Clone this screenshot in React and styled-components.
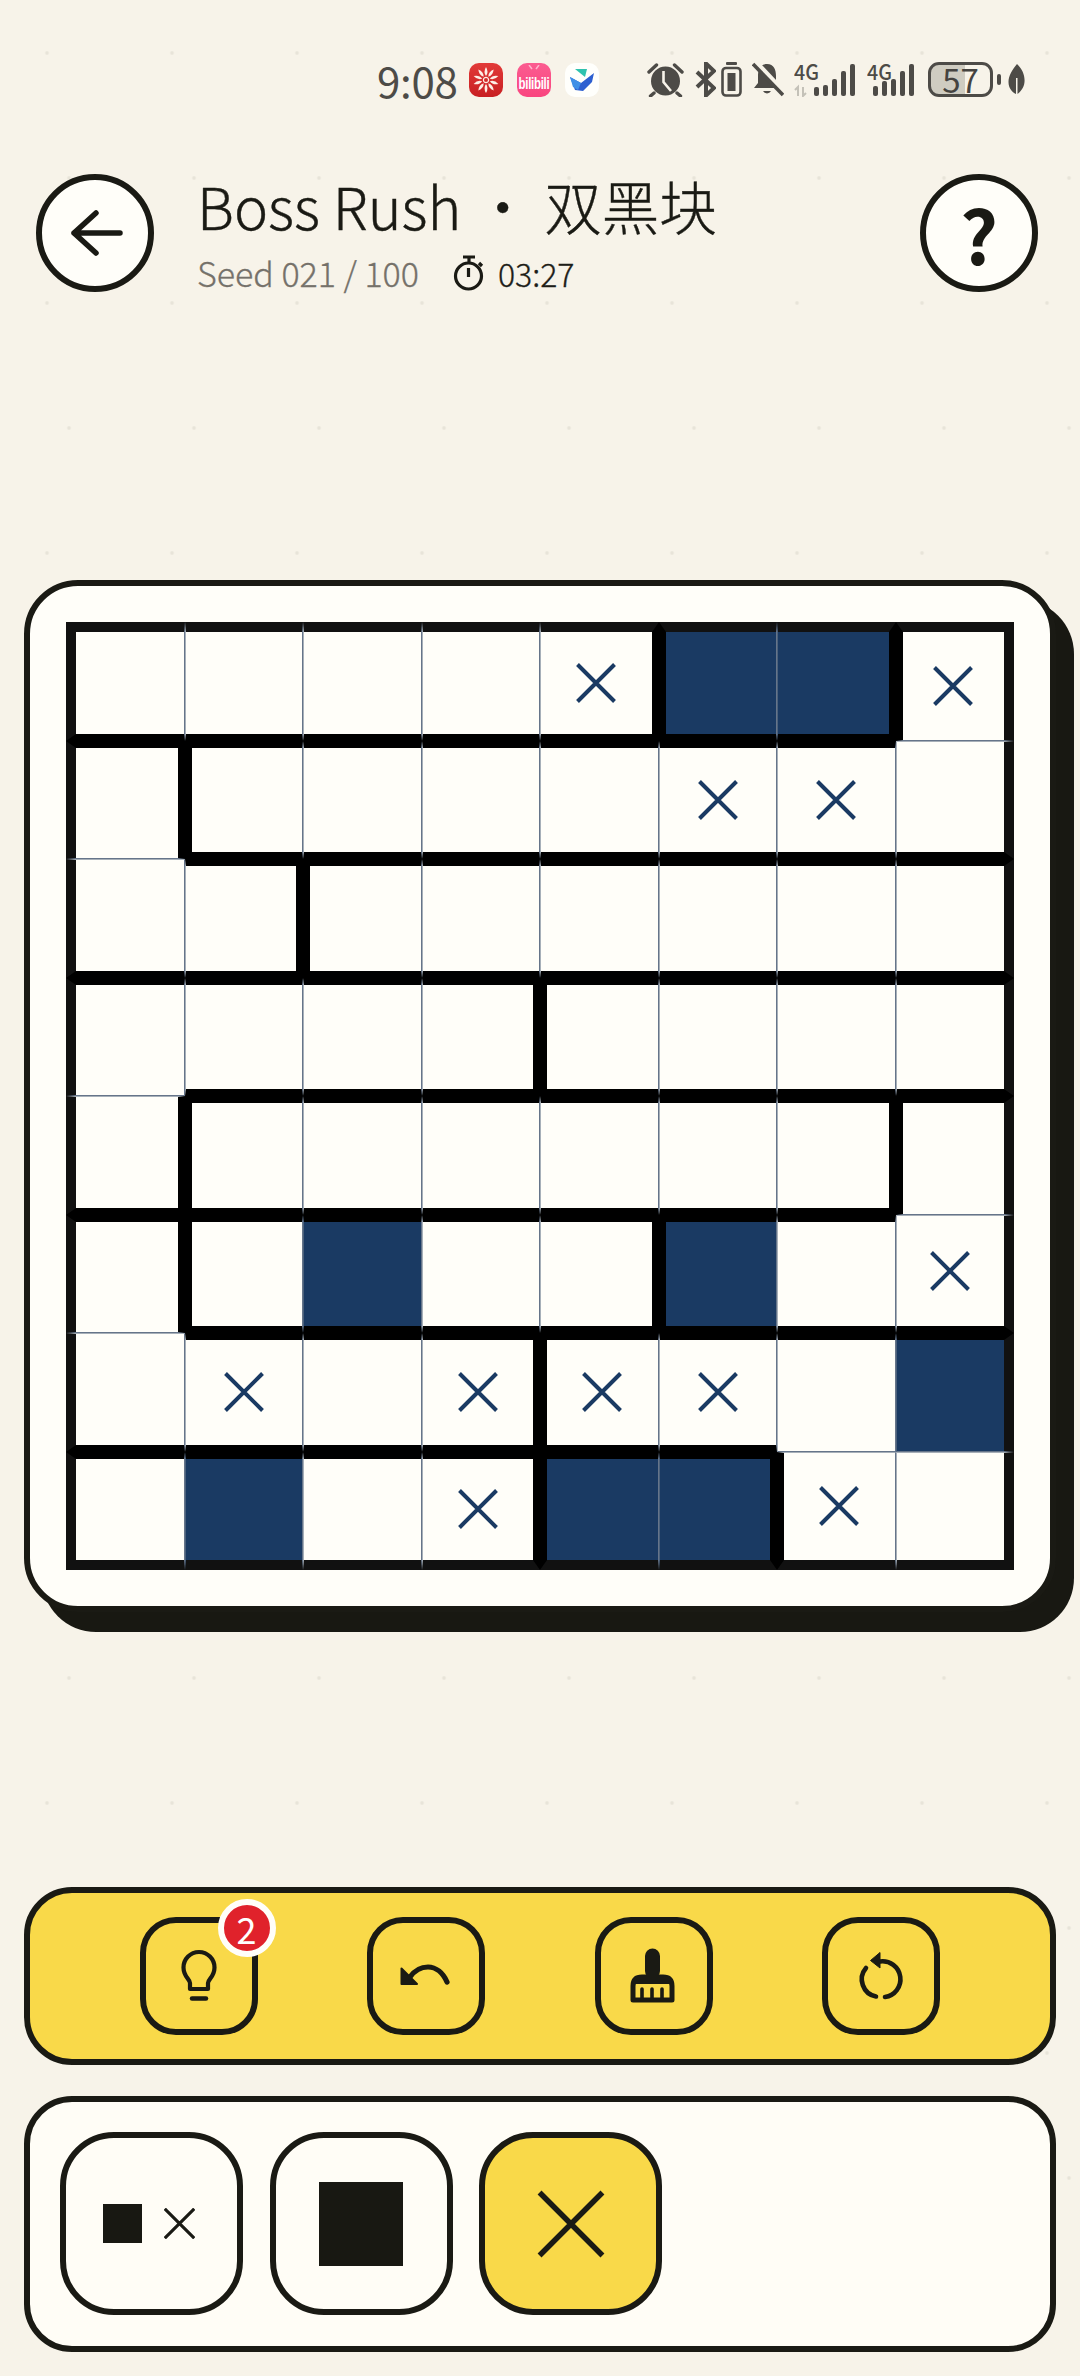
import React from 'react';
import styled, { createGlobalStyle } from 'styled-components';

const INK = '#1a1a14';
const BG = '#f7f3e9';
const STATUS = '#4d4b47';
const FONT = '"Noto Sans CJK SC", "Noto Sans", sans-serif';

const Global = createGlobalStyle`
  html, body { margin: 0; padding: 0; background: ${BG}; }
  * { box-sizing: border-box; }
`;

const Page = styled.div`
  width: 1080px;
  height: 2376px;
  padding: 0 24px;
  overflow: hidden;
  display: flex;
  flex-direction: column;
  font-family: ${FONT};
  color: ${INK};
  background-color: ${BG};
  background-image:
    radial-gradient(circle, #e8e4d9 1.4px, transparent 2.2px),
    radial-gradient(circle, #e8e4d9 1.4px, transparent 2.2px);
  background-size: 125px 250px, 125px 250px;
  background-position: -15.5px -72px, 6.5px 53px;
`;

/* status bar */
const StatusBar = styled.div`
  margin-top: 62px;
  height: 35px;
  padding-left: 353px;
  display: flex;
  align-items: center;
`;
const Clock = styled.div`
  width: 92px;
  font-size: 42px;
  line-height: 35px;
  letter-spacing: -0.3px;
  color: ${STATUS};
`;
const AppIcon = styled.div`
  position: relative;
  width: 34px;
  height: 34px;
  margin-right: 14px;
  border-radius: 10px;
  background: ${p => p.$bg};
  display: flex;
  align-items: center;
  justify-content: center;
  overflow: hidden;
`;
const BiliText = styled.span`
  font-family: "Liberation Sans", sans-serif;
  font-size: 11.5px;
  line-height: 12px;
  font-weight: 700;
  color: #fff;
  letter-spacing: -0.3px;
  margin-top: 6px;
  transform: scaleY(1.4);
`;
const BiliEars = styled.svg`
  position: absolute;
  top: 2px;
  left: 8px;
`;
const Glyph = styled.svg`
  display: block;
  flex: none;
  margin-left: ${p => p.$gap || 0}px;
  margin-top: ${p => p.$lift ? -p.$lift : 0}px;
`;
const BatteryBody = styled.div`
  margin-left: 12px;
  width: 65px;
  height: 35px;
  border: 3px solid ${STATUS};
  border-radius: 11px;
  background: linear-gradient(90deg, #cfccc1 0 58%, transparent 58%);
  color: #454340;
  font-size: 33px;
  line-height: 28px;
  text-align: center;
`;
const BatteryNub = styled.div`
  margin-left: 4px;
  width: 4px;
  height: 11px;
  border-radius: 2px;
  background: ${STATUS};
`;

/* header */
const Header = styled.header`
  margin-top: 77px;
  height: 118px;
  padding: 0 18px 0 12px;
  display: flex;
  align-items: flex-start;
`;
const RoundButton = styled.button`
  flex: none;
  width: 118px;
  height: 118px;
  padding: 0;
  border: 6px solid ${INK};
  border-radius: 50%;
  background: #fffef9;
  color: ${INK};
  font-family: ${FONT};
  font-size: 74px;
  font-weight: 700;
  line-height: 1;
  display: flex;
  align-items: center;
  justify-content: center;
`;
const TitleBlock = styled.div`
  flex: 1;
  margin-left: 43px;
  margin-top: -3px;
  display: flex;
  flex-direction: column;
`;
const Title = styled.h1`
  margin: 0;
  font-size: 57.500px;
  font-weight: 300;
  -webkit-text-stroke: 0.4px ${INK};
  line-height: 68px;
  white-space: pre;
`;
const SubRow = styled.div`
  margin-top: 11px;
  display: flex;
  align-items: center;
  line-height: 46px;
`;
const Seed = styled.span`
  font-size: 34px;
  font-weight: 300;
  -webkit-text-stroke: 0.3px #75716a;
  color: #75716a;
`;
const Time = styled.span`
  margin-left: 12px;
  font-size: 32px;
  font-weight: 300;
  -webkit-text-stroke: 0.3px #1d1d18;
  color: #1d1d18;
`;

/* board */
const Card = styled.section`
  margin-top: 288px;
  width: 1032px;
  height: 1032px;
  padding: 36px;
  border: 6px solid ${INK};
  border-radius: 54px;
  background: #fffef9;
  box-shadow: 18px 20px 0 #181812;
`;
const Board = styled.div`
  width: 948px;
  height: 948px;
  display: grid;
  grid-template-columns: repeat(8, 1fr);
  grid-template-rows: repeat(8, 1fr);
`;
const edge = v =>
  v === 'outer' ? '10px solid #111' :
  v === 'wall' ? '7px solid #000' :
  v === 'thin' ? '1px solid #66758a' :
  v === 'soft' ? '1px solid rgba(109,124,141,.6)' : 'none';
const Cell = styled.div`
  min-width: 0;
  min-height: 0;
  display: flex;
  align-items: center;
  justify-content: center;
  background: ${p => (p.$filled ? '#1a3a63' : '#fffef9')};
  border-top: ${p => edge(p.$t)};
  border-right: ${p => edge(p.$r)};
  border-bottom: ${p => edge(p.$b)};
  border-left: ${p => edge(p.$l)};
`;

/* tool bar */
const Toolbar = styled.div`
  margin-top: 275px;
  height: 178px;
  border: 6px solid ${INK};
  border-radius: 48px;
  background: #f9d949;
  display: flex;
  align-items: center;
  justify-content: space-evenly;
`;
const ToolButton = styled.button`
  position: relative;
  width: 118px;
  height: 118px;
  padding: 0;
  border: 6px solid ${INK};
  border-radius: 36px;
  background: transparent;
  display: flex;
  align-items: center;
  justify-content: center;
`;
const Badge = styled.span`
  position: absolute;
  top: -24px;
  right: -24px;
  width: 58px;
  height: 58px;
  border: 6px solid #fffef9;
  border-radius: 50%;
  background: #e0222b;
  color: #fff;
  font-family: ${FONT};
  font-size: 36px;
  font-weight: 400;
  line-height: 46px;
  text-align: center;
`;

/* mode panel */
const ModePanel = styled.div`
  margin-top: 31px;
  height: 256px;
  padding: 30px;
  border: 6px solid ${INK};
  border-radius: 48px;
  background: #fffdf6;
  display: flex;
  gap: 26.500px;
`;
const ModeButton = styled.button`
  width: 183px;
  height: 183px;
  padding: 0 ${p => p.$shift || 0}px 0 0;
  border: 6px solid ${INK};
  border-radius: 54px;
  background: ${p => (p.$active ? '#f9d949' : '#fffdf6')};
  display: flex;
  align-items: center;
  justify-content: center;
`;
const Square = styled.div`
  width: ${p => p.$size}px;
  height: ${p => p.$size}px;
  background: #181812;
`;

const vWalls = [[4, 6], [0], [1], [3], [0, 6], [0, 4], [3], [3, 5]];
const hWalls = [
  [0, 1, 2, 3, 4, 5, 6],
  [1, 2, 3, 4, 5, 6, 7],
  [0, 1, 2, 3, 4, 5, 6, 7],
  [1, 2, 3, 4, 5, 6, 7],
  [0, 1, 2, 3, 4, 5, 6],
  [1, 2, 3, 4, 5, 6, 7],
  [0, 1, 2, 3, 4, 5],
];
const marks = [
  '....x##x',
  '.....xx.',
  '........',
  '........',
  '........',
  '..#..#.x',
  '.x.xxx.#',
  '.#.x##x.',
];

const CrossMark = ({ size = 40, color = '#1a3a63', width = 4 }) => (
  <Glyph width={size} height={size} viewBox="0 0 40 40">
    <path d="M1.5 1.5 38.5 38.5M38.5 1.5 1.5 38.5" stroke={color} strokeWidth={width * 40 / size} fill="none" />
  </Glyph>
);

const cells = [];
for (let r = 0; r < 8; r++) {
  for (let c = 0; c < 8; c++) {
    cells.push({
      key: `${r}-${c}`,
      t: r === 0 ? 'outer' : hWalls[r - 1].includes(c) ? 'wall' : 'soft',
      b: r === 7 ? 'outer' : hWalls[r].includes(c) ? 'wall' : 'thin',
      l: c === 0 ? 'outer' : vWalls[r].includes(c - 1) ? 'wall' : 'soft',
      r: c === 7 ? 'outer' : vWalls[r].includes(c) ? 'wall' : 'thin',
      m: marks[r][c],
    });
  }
}

const Net = ({ gap, textX, barX, heights, arrows, w }) => (
  <Glyph $gap={gap} $lift={7} width={w} height={42} viewBox={`0 -7 ${w} 42`}>
    <text x={textX} y={18} fontFamily='"Noto Sans CJK SC", sans-serif' fontSize="21" fontWeight="500" textLength="25" lengthAdjust="spacingAndGlyphs" fill={STATUS}>4G</text>
    {heights.map((h, i) => (
      <rect key={i} x={barX + i * 9} y={34 - h} width={5} height={h} rx={2} fill={STATUS} />
    ))}
    {arrows && <path d="M4 25v9M1 28l3-3v9M9 25v9l3-3" stroke="#c4c1b8" strokeWidth="2" fill="none" />}
  </Glyph>
);

export default function App() {
  return (
    <Page>
      <Global />
      <StatusBar>
        <Clock>9:08</Clock>
        <AppIcon $bg="linear-gradient(180deg,#e23a38,#c81f22)">
          <svg width="28" height="28" viewBox="-14 -14 28 28">
            {[0, 36, 72, 108, 144, 180, 216, 252, 288, 324].map(a => (
              <path key={a} d="M0-4 Q3-8 0-13 Q-3-8 0-4" transform={`rotate(${a})`} fill="#fdeee6" />
            ))}
            <circle r="2.6" fill="none" stroke="#fdeee6" strokeWidth="1.2" />
          </svg>
        </AppIcon>
        <AppIcon $bg="linear-gradient(180deg,#fb5c90,#f9457f)">
          <BiliEars width="18" height="6" viewBox="0 0 18 6">
            <path d="M4 0 7 4M14 0 11 4" stroke="#ffb3cc" strokeWidth="1.5" fill="none" />
          </BiliEars>
          <BiliText>bilibili</BiliText>
        </AppIcon>
        <AppIcon $bg="#fffffc">
          <svg width="26" height="24" viewBox="0 0 26 24">
            <path d="M6 1h12l-2 8z" fill="#2fc2ae" />
            <path d="M1 9l11 6L25 5l-2 9-9 9-8-1z" fill="#2d5fd0" />
            <path d="M1 9l11 6-3 7-5-3z" fill="#3f8fe6" />
          </svg>
        </AppIcon>
        <Glyph $gap={34} width={37} height={35} viewBox="0 0 37 35">
          <circle cx="18.5" cy="19" r="14.5" fill={STATUS} />
          <path d="M16.5 9V20L24 29" stroke={BG} strokeWidth="2.6" fill="none" />
          <path d="M2 10 9.5 3M35 10 27.5 3M7 31 3.5 34M30 31 33.5 34" stroke={STATUS} strokeWidth="3.4" strokeLinecap="round" />
        </Glyph>
        <Glyph $gap={11} width={21} height={35} viewBox="0 0 21 35">
          <path d="M2 10 19 26 11 33.5V1.5L19 9 2 25" stroke={STATUS} strokeWidth="4" fill="none" />
        </Glyph>
        <Glyph $gap={5} width={21} height={35} viewBox="0 0 21 35">
          <rect x="5" y="0" width="11" height="3" rx="1" fill={STATUS} />
          <rect x="1.5" y="6" width="18" height="27.5" rx="3.5" stroke={STATUS} strokeWidth="2.6" fill="none" />
          <rect x="6.5" y="11" width="8" height="18" fill={STATUS} />
        </Glyph>
        <Glyph $gap={10} width={32} height={35} viewBox="0 0 32 35">
          <path d="M15 2C8 2 6 8 6 14V21L2 26H28L24 21V14C24 8 22 2 15 2Z" fill={STATUS} />
          <path d="M11 29a4.500 4.500 0 0 0 8 0Z" fill={STATUS} />
          <path d="M3 0 33 32" stroke={BG} strokeWidth="6" />
          <path d="M1 2 31 33" stroke={STATUS} strokeWidth="3.6" />
        </Glyph>
        <Net gap={10} w={61} textX={0} barX={20} heights={[9, 11, 17, 25, 32]} arrows />
        <Net gap={12} w={49} textX={0} barX={6} heights={[10, 15, 17, 25, 32]} />
        <BatteryBody>57</BatteryBody>
        <BatteryNub />
        <Glyph $gap={7} width={17} height={31} viewBox="0 0 17 31">
          <path d="M9 0C15 6 17 12 16.500 18 16 24 12 28 9.500 30V14H8V30C4 28 .5 24 .5 18 .5 12 4 6 9 0Z" fill={STATUS} />
        </Glyph>
      </StatusBar>

      <Header>
        <RoundButton aria-label="back">
          <svg width="60" height="60" viewBox="-30 -30 60 60">
            <path d="M25 0H-21M1-20-21 0 1 20" stroke={INK} strokeWidth="5.500" strokeLinecap="round" strokeLinejoin="round" fill="none" />
          </svg>
        </RoundButton>
        <TitleBlock>
          <Title>Boss Rush ・ 双黑块</Title>
          <SubRow>
            <Seed>Seed 021 / 100</Seed>
            <Glyph $gap={33} width={34} height={36} viewBox="0 0 34 36">
              <path d="M11 2H23M17 2V7M27 8l3 3" stroke={INK} strokeWidth="3.200" fill="none" />
              <circle cx="16.500" cy="21" r="13" stroke={INK} strokeWidth="3.200" fill="none" />
              <path d="M16.500 13V22" stroke={INK} strokeWidth="3.200" />
            </Glyph>
            <Time>03:27</Time>
          </SubRow>
        </TitleBlock>
        <RoundButton aria-label="help">?</RoundButton>
      </Header>

      <Card>
        <Board>
          {cells.map(c => (
            <Cell key={c.key} $t={c.t} $r={c.r} $b={c.b} $l={c.l} $filled={c.m === '#'}>
              {c.m === 'x' && <CrossMark />}
            </Cell>
          ))}
        </Board>
      </Card>

      <Toolbar>
        <ToolButton aria-label="hint">
          <svg width="60" height="60" viewBox="-30 -30 60 60">
            <path d="M-9 13V7C-9 3-15.500 1-15.500-8.500A15.500 15.500 0 0 1 15.500-8.500C15.500 1 9 3 9 7V13Z" stroke={INK} strokeWidth="4.200" fill="none" strokeLinejoin="round" />
            <path d="M-7 22.500H7" stroke={INK} strokeWidth="4.500" strokeLinecap="round" />
          </svg>
          <Badge>2</Badge>
        </ToolButton>
        <ToolButton aria-label="undo">
          <svg width="60" height="60" viewBox="-30 -30 60 60">
            <path d="M-24.500-7.500V8H-9Z" fill={INK} stroke={INK} strokeWidth="2" strokeLinejoin="round" />
            <path d="M-16 1C-11-6-4-9 2-9 10-9 17-3 21 6" stroke={INK} strokeWidth="5.200" strokeLinecap="round" fill="none" />
          </svg>
        </ToolButton>
        <ToolButton aria-label="clear">
          <svg width="60" height="60" viewBox="-30 -30 60 60">
            <rect x="-9" y="-27.500" width="15" height="30" rx="7.500" fill={INK} />
            <path d="M-21 24V10Q-21 1-12 1H9Q18 1 18 10V24Z" stroke={INK} strokeWidth="5" strokeLinejoin="round" fill="none" />
            <path d="M-20 3H17V8H-20Z" fill={INK} />
            <path d="M-12 13V24M-2 13V24M8 13V24" stroke={INK} strokeWidth="3.600" strokeLinecap="round" />
          </svg>
        </ToolButton>
        <ToolButton aria-label="restart">
          <svg width="60" height="60" viewBox="-30 -30 60 60">
            <path d="M-1-15.500A17.500 17.500 0 0 1 4 20" transform="translate(0 1)" stroke={INK} strokeWidth="4.600" strokeLinecap="round" fill="none" />
            <path d="M-5 20.500A17.500 17.500 0 0 1-15-8" stroke={INK} strokeWidth="4.600" strokeLinecap="round" fill="none" />
            <path d="M-10.500-15.500-1-23.500V-8Z" fill={INK} stroke={INK} strokeWidth="1" strokeLinejoin="round" />
          </svg>
        </ToolButton>
      </Toolbar>

      <ModePanel>
        <ModeButton $shift={6} aria-label="both">
          <Square $size={39} />
          <Glyph $gap={22} width={31} height={31} viewBox="0 0 40 40">
            <path d="M1 1 39 39M39 1 1 39" stroke={INK} strokeWidth="4" fill="none" />
          </Glyph>
        </ModeButton>
        <ModeButton aria-label="fill">
          <Square $size={84} />
        </ModeButton>
        <ModeButton $active aria-label="cross">
          <CrossMark size={68} color={INK} width={5.5} />
        </ModeButton>
      </ModePanel>
    </Page>
  );
}
